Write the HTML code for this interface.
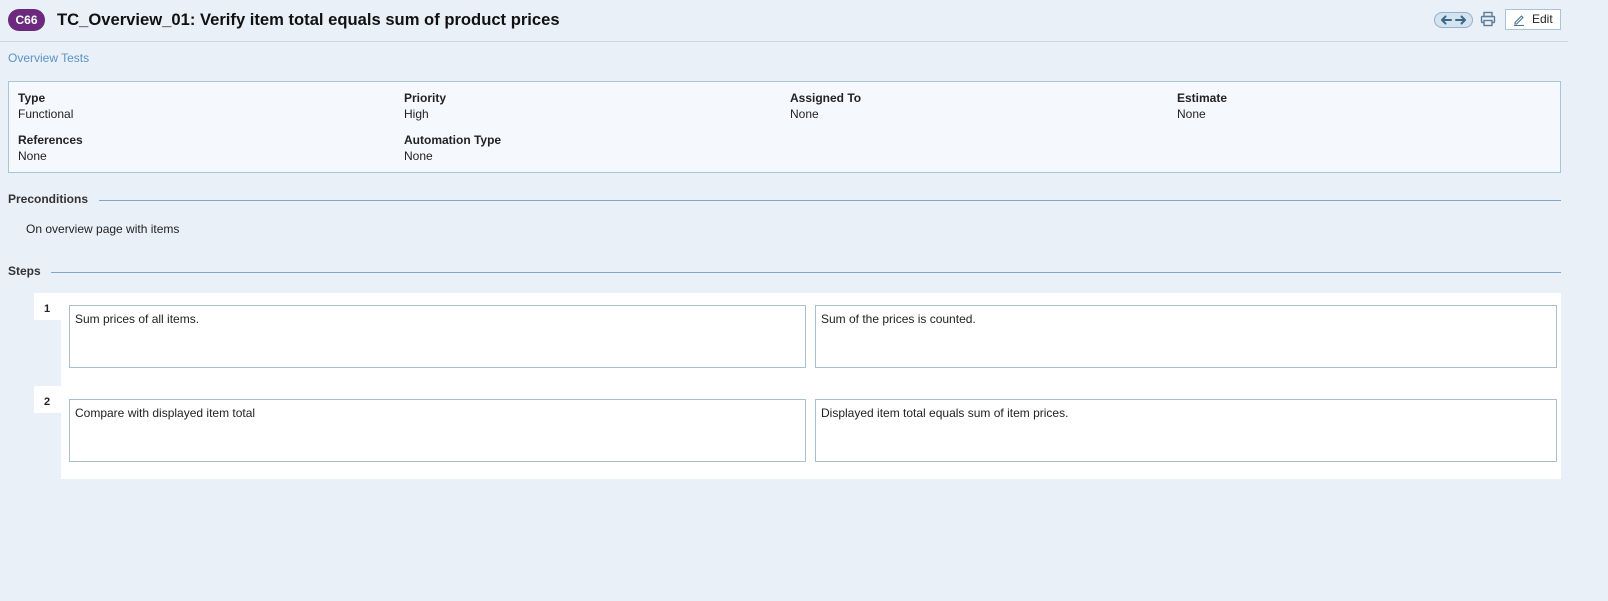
<!DOCTYPE html>
<html><head><meta charset="utf-8"><style>
*{margin:0;padding:0;box-sizing:border-box}
body{width:1608px;height:601px;background:#e9f0f7;font-family:"Liberation Sans",sans-serif;font-size:12px;color:#222;position:relative;overflow:hidden}
.a{position:absolute}
.badge{left:8px;top:9px;width:37px;height:22px;border-radius:11px;background:#6b2a7d;color:#fff;font-weight:bold;font-size:12px;text-align:center;line-height:22px}
.title{left:57px;top:9px;font-size:16.6px;font-weight:bold;color:#111;line-height:22px}
.hr{left:0;top:41px;width:1568px;height:1px;background:#c9d9e8}
.lab{font-weight:bold;color:#222}
.box{background:#fff;border:1px solid #a9bfd2;padding:6px 5px;font-size:12px;color:#222}
.sec{font-weight:bold;color:#333}
.line{height:1px;background:#7fa6c8}
</style></head><body>
<div class="a badge">C66</div>
<div class="a title">TC_Overview_01: Verify item total equals sum of product prices</div>
<div class="a" style="left:1434px;top:12px;width:39px;height:16px;border:1px solid #8fb1cc;border-radius:8px;background:#d4e3ef"></div>
<svg class="a" style="left:1434px;top:12px" width="39" height="16" viewBox="0 0 39 16" fill="none" stroke="#3d6788" stroke-width="2" stroke-linecap="round" stroke-linejoin="round"><path d="M8 8 H17 M11.5 4.5 L8 8 L11.5 11.5"/><path d="M22 8 H31 M27.5 4.5 L31 8 L27.5 11.5"/></svg>
<svg class="a" style="left:1480px;top:11px" width="16" height="16" viewBox="0 0 16 16" fill="none" stroke="#5a7d99" stroke-width="1.4"><rect x="4" y="1.5" width="8" height="4"/><rect x="1.5" y="5.5" width="13" height="6" rx="1"/><rect x="4" y="9.5" width="8" height="5" fill="#e9f0f7"/></svg>
<div class="a" style="left:1505px;top:9px;width:56px;height:21px;border:1px solid #a9c3d8;background:#fff;font-size:12px;line-height:19px;color:#222;padding-left:26px">Edit</div>
<svg class="a" style="left:1513px;top:13px" width="13" height="13" viewBox="0 0 13 13" fill="none" stroke="#4d7391" stroke-width="1.1"><path d="M2 9.5 L8.5 3 L10 4.5 L3.5 11 L2 11 Z"/><path d="M1 12.5 H11"/></svg>
<div class="hr a"></div>
<div class="a" style="left:8px;top:51px;color:#5b93c4;font-size:12px">Overview Tests</div>
<div class="a" style="left:8px;top:81px;width:1553px;height:92px;background:#f5f9fd;border:1px solid #abc3d6"></div>
<div class="a" style="left:18px;top:90px;line-height:16px"><div class="lab">Type</div><div>Functional</div></div>
<div class="a" style="left:404px;top:90px;line-height:16px"><div class="lab">Priority</div><div>High</div></div>
<div class="a" style="left:790px;top:90px;line-height:16px"><div class="lab">Assigned To</div><div>None</div></div>
<div class="a" style="left:1177px;top:90px;line-height:16px"><div class="lab">Estimate</div><div>None</div></div>
<div class="a" style="left:18px;top:132px;line-height:16px"><div class="lab">References</div><div>None</div></div>
<div class="a" style="left:404px;top:132px;line-height:16px"><div class="lab">Automation Type</div><div>None</div></div>
<div class="a sec" style="left:8px;top:192px">Preconditions</div>
<div class="a line" style="left:99px;top:200px;width:1462px"></div>
<div class="a" style="left:26px;top:222px">On overview page with items</div>
<div class="a sec" style="left:8px;top:264px">Steps</div>
<div class="a line" style="left:51px;top:272px;width:1510px"></div>
<div class="a" style="left:61px;top:293px;width:1500px;height:186px;background:#fff"></div>
<div class="a" style="left:34px;top:293px;width:27px;height:27px;background:#fff;font-weight:bold;font-size:11px;padding:10px 0 0 10px;color:#222">1</div>
<div class="a" style="left:34px;top:386px;width:27px;height:27px;background:#fff;font-weight:bold;font-size:11px;padding:10px 0 0 10px;color:#222">2</div>
<div class="a box" style="left:69px;top:305px;width:737px;height:63px">Sum prices of all items.</div>
<div class="a box" style="left:815px;top:305px;width:742px;height:63px">Sum of the prices is counted.</div>
<div class="a box" style="left:69px;top:399px;width:737px;height:63px">Compare with displayed item total</div>
<div class="a box" style="left:815px;top:399px;width:742px;height:63px">Displayed item total equals sum of item prices.</div>
</body></html>
